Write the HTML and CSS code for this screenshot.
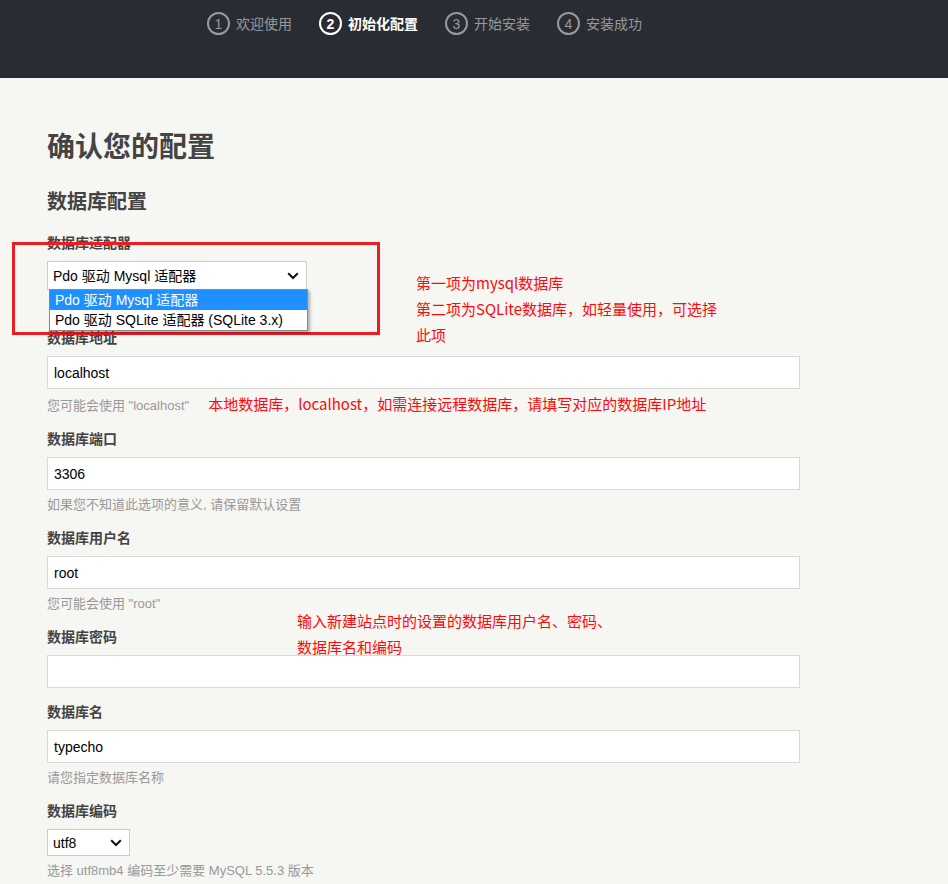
FILE: index.html
```html
<!DOCTYPE html>
<html lang="zh-CN">
<head>
<meta charset="utf-8">
<title>Typecho 安装程序</title>
<link rel="stylesheet" href="styles.css">
</head>
<body>
<header class="topbar">
  <ol class="steps">
    <li class="step"><span class="num">1</span><span class="step-text">欢迎使用</span></li>
    <li class="step active"><span class="num">2</span><span class="step-text">初始化配置</span></li>
    <li class="step"><span class="num">3</span><span class="step-text">开始安装</span></li>
    <li class="step"><span class="num">4</span><span class="step-text">安装成功</span></li>
  </ol>
</header>

<main class="main">
  <h1 class="title">确认您的配置</h1>
  <h2 class="subtitle">数据库配置</h2>

  <ul class="form">
    <li class="row row-adapter">
      <label class="label">数据库适配器</label>
      <div class="select-wrap">
        <select class="select adapter">
          <option>Pdo 驱动 Mysql 适配器</option>
          <option>Pdo 驱动 SQLite 适配器 (SQLite 3.x)</option>
        </select>
        <svg class="chev" width="12" height="8" viewBox="0 0 12 8"><path d="M1.2 1.2 L6 6 L10.8 1.2" fill="none" stroke="#111" stroke-width="2"/></svg>
        <div class="dropdown">
          <div class="opt selected">Pdo 驱动 Mysql 适配器</div>
          <div class="opt">Pdo 驱动 SQLite 适配器 (SQLite 3.x)</div>
        </div>
      </div>
    </li>
    <li class="row">
      <label class="label">数据库地址</label>
      <input class="text" type="text" value="localhost">
      <p class="hint">您可能会使用 "localhost"<span class="note inline-note">本地数据库，localhost，如需连接远程数据库，请填写对应的数据库IP地址</span></p>
    </li>
    <li class="row">
      <label class="label">数据库端口</label>
      <input class="text" type="text" value="3306">
      <p class="hint">如果您不知道此选项的意义, 请保留默认设置</p>
    </li>
    <li class="row">
      <label class="label">数据库用户名</label>
      <input class="text" type="text" value="root">
      <p class="hint">您可能会使用 "root"</p>
    </li>
    <li class="row">
      <label class="label">数据库密码</label>
      <input class="text" type="password" value="">
    </li>
    <li class="row">
      <label class="label">数据库名</label>
      <input class="text" type="text" value="typecho">
      <p class="hint">请您指定数据库名称</p>
    </li>
    <li class="row">
      <label class="label">数据库编码</label>
      <div class="select-wrap small">
        <select class="select charset">
          <option>utf8</option>
          <option>utf8mb4</option>
        </select>
        <svg class="chev" width="12" height="8" viewBox="0 0 12 8"><path d="M1.2 1.2 L6 6 L10.8 1.2" fill="none" stroke="#111" stroke-width="2"/></svg>
      </div>
      <p class="hint">选择 utf8mb4 编码至少需要 MySQL 5.5.3 版本</p>
    </li>
  </ul>

  <div class="redbox"></div>
  <p class="note note-adapter">第一项为mysql数据库<br>第二项为SQLite数据库，如轻量使用，可选择<br>此项</p>
  <p class="note note-user">输入新建站点时的设置的数据库用户名、密码、<br>数据库名和编码</p>
</main>
</body>
</html>
```

FILE: styles.css
```css
* { box-sizing: border-box; }

html, body {
  margin: 0;
  padding: 0;
}

body {
  background: #f6f6f3;
  font-family: "Liberation Sans", "Noto Sans CJK SC", sans-serif;
  color: #444;
  width: 948px;
  height: 884px;
  overflow: hidden;
}

/* header */
.topbar {
  background: #292d33;
  height: 78px;
  padding: 12px 0 0 207px;
}

.steps {
  list-style: none;
  margin: 0;
  padding: 0;
  display: flex;
  gap: 27px;
}

.step {
  display: flex;
  align-items: center;
  gap: 6px;
  color: #999;
  font-family: "Noto Sans CJK SC", sans-serif;
  font-size: 14px;
  line-height: 23px;
}

.num {
  width: 23px;
  height: 23px;
  border: 2px solid #999;
  border-radius: 50%;
  display: flex;
  align-items: center;
  justify-content: center;
  font-family: "Liberation Sans", sans-serif;
  font-size: 14px;
  line-height: 1;
}

.step.active { color: #fff; font-weight: bold; }
.step.active .num { border-color: #fff; }

/* main */
.main {
  position: relative;
  padding: 47px 0 0 47px;
}

.title {
  margin: 0;
  font-size: 28px;
  line-height: 40px;
  font-weight: bold;
  color: #444;
  font-family: "Noto Sans CJK SC", sans-serif;
}

.subtitle {
  margin: 21px 0 0;
  font-size: 20px;
  line-height: 30px;
  font-weight: bold;
  color: #444;
  font-family: "Noto Sans CJK SC", sans-serif;
}

.form {
  list-style: none;
  margin: 18px 0 0;
  padding: 0;
  width: 753px;
}

.row {
  margin-bottom: 15px;
}

.row-adapter {
  margin-bottom: 39px;
}

.label {
  display: block;
  font-size: 14px;
  line-height: 18px;
  font-weight: bold;
  color: #444;
  margin-bottom: 9px;
}

.text {
  display: block;
  width: 753px;
  height: 33px;
  border: 1px solid #d9d9d6;
  background: #fff;
  padding: 0 6px;
  font-family: "Liberation Sans", "Noto Sans CJK SC", sans-serif;
  font-size: 14px;
  color: #000;
  outline: none;
}

.hint {
  margin: 6px 0 0;
  font-size: 13px;
  line-height: 18px;
  color: #999;
}

.select-wrap {
  position: relative;
  width: 260px;
  height: 29px;
}

.select-wrap.small {
  width: 83px;
  height: 27px;
}

.select {
  display: block;
  width: 100%;
  height: 100%;
  appearance: none;
  -webkit-appearance: none;
  border: 1px solid #ccc;
  border-radius: 0;
  background: #fff;
  padding: 0 0 0 5px;
  font-family: "Liberation Sans", "Noto Sans CJK SC", sans-serif;
  font-size: 14px;
  color: #000;
}

.chev {
  position: absolute;
  right: 8px;
  top: 50%;
  margin-top: -4px;
  pointer-events: none;
}

.dropdown {
  position: absolute;
  left: 2px;
  top: 28px;
  width: 259px;
  background: #fff;
  border: 1px solid #8a8a8a;
  box-shadow: 2px 2px 3px rgba(0, 0, 0, 0.3);
  z-index: 2;
}

.opt {
  height: 20px;
  line-height: 20px;
  padding-left: 5px;
  font-size: 14px;
  color: #000;
  white-space: nowrap;
}

.opt.selected {
  background: #1e90ff;
  color: #fff;
}

/* annotations */
.note {
  margin: 0;
  color: #ff0a0a;
  font-family: "Noto Sans CJK SC", sans-serif;
  font-size: 15px;
  line-height: 26px;
}

.inline-note {
  margin-left: 19px;
  font-size: 15px;
  line-height: 18px;
}

.redbox {
  position: absolute;
  left: 12px;
  top: 164px;
  width: 368px;
  height: 93px;
  border: 3px solid #ed1c24;
  pointer-events: none;
}

.note-adapter {
  position: absolute;
  left: 416px;
  top: 192px;
}

.note-user {
  position: absolute;
  left: 297px;
  top: 530px;
}
```
